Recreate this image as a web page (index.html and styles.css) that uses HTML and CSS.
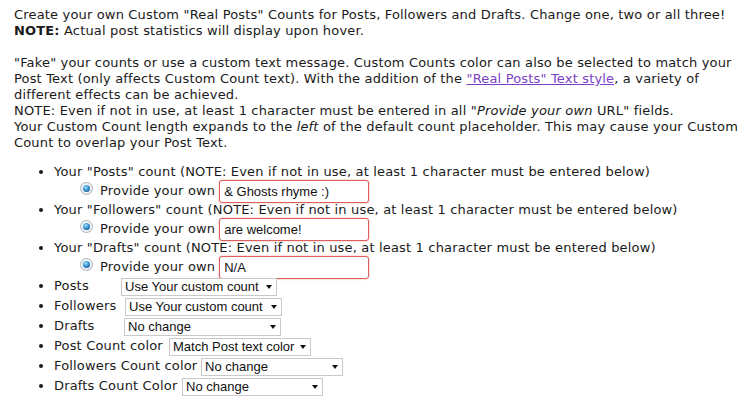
FILE: index.html
```html
<!DOCTYPE html>
<html>
<head>
<meta charset="utf-8">
<link rel="stylesheet" href="styles.css">
</head>
<body>
<div class="page">
  <p class="intro">Create your own Custom "Real Posts" Counts for Posts, Followers and Drafts. Change one, two or all three!<br><b>NOTE:</b> Actual post statistics will display upon hover.<br><br>"Fake" your counts or use a custom text message. Custom Counts color can also be selected to match your Post Text (only affects Custom Count text). With the addition of the <a href="#" class="link">"Real Posts" Text style</a>, a variety of different effects can be achieved.<br>NOTE: Even if not in use, at least 1 character must be entered in all "<i>Provide your own</i> URL" fields.<br>Your Custom Count length expands to the <i>left</i> of the default count placeholder. This may cause your Custom Count to overlap your Post Text.</p>

  <ul class="opts">
    <li class="text-item">Your "Posts" count (NOTE: Even if not in use, at least 1 character must be entered below)
      <ul class="sub">
        <li class="prov"><input type="radio" class="radio" name="p" checked><span class="prov-lbl">Provide your own</span><input type="text" class="field" value="&amp; Ghosts rhyme :)"></li>
      </ul>
    </li>
    <li class="text-item">Your "Followers" count (NOTE: Even if not in use, at least 1 character must be entered below)
      <ul class="sub">
        <li class="prov"><input type="radio" class="radio" name="f" checked><span class="prov-lbl">Provide your own</span><input type="text" class="field" value="are welcome!"></li>
      </ul>
    </li>
    <li class="text-item">Your "Drafts" count (NOTE: Even if not in use, at least 1 character must be entered below)
      <ul class="sub">
        <li class="prov"><input type="radio" class="radio" name="d" checked><span class="prov-lbl">Provide your own</span><input type="text" class="field" value="N/A"></li>
      </ul>
    </li>
    <li class="sel-row"><span class="lbl lbl-posts">Posts</span><span class="sel sel-w156"><select><option>Use Your custom count</option><option>No change</option></select></span></li>
    <li class="sel-row"><span class="lbl lbl-followers">Followers</span><span class="sel sel-w157"><select><option>Use Your custom count</option><option>No change</option></select></span></li>
    <li class="sel-row"><span class="lbl lbl-drafts">Drafts</span><span class="sel sel-w157"><select><option>No change</option><option>Use Your custom count</option></select></span></li>
    <li class="sel-row"><span class="lbl lbl-pcc">Post Count color</span><span class="sel sel-w142"><select><option>Match Post text color</option><option>No change</option></select></span></li>
    <li class="sel-row"><span class="lbl lbl-fcc">Followers Count color</span><span class="sel sel-w142"><select><option>No change</option><option>Match Post text color</option></select></span></li>
    <li class="sel-row"><span class="lbl lbl-dcc">Drafts Count Color</span><span class="sel sel-w141"><select><option>No change</option><option>Match Post text color</option></select></span></li>
  </ul>
</div>
</body>
</html>
```

FILE: styles.css
```css
html, body {
  margin: 0;
  padding: 0;
  background: #ffffff;
}

.page {
  padding: 7px 4px 0 14px;
  font-family: "DejaVu Sans", Verdana, sans-serif;
  font-size: 13px;
  line-height: 16px;
  letter-spacing: 0.17px;
  color: #1a1a1a;
}

.intro {
  margin: 0;
}

.link {
  color: #7b3fc5;
  text-decoration: underline;
}

.opts {
  margin: 13px 0 0 0;
  padding: 0 0 0 40px;
  list-style: disc;
}

.text-item {
  line-height: 16px;
}

.sub {
  margin: 0;
  padding: 0 0 0 26px;
  list-style: none;
}

.prov {
  display: flex;
  align-items: center;
  height: 22px;
}

.radio {
  appearance: none;
  -webkit-appearance: none;
  box-sizing: border-box;
  width: 13px;
  height: 13px;
  margin: -6px 7px 0 0;
  border-radius: 50%;
  border: 1px solid #aab4be;
  background: radial-gradient(circle at 50% 40%, #ffffff 0, #e4e8ec 100%);
  position: relative;
  flex: none;
}

.radio:checked::after {
  content: "";
  position: absolute;
  left: 2px;
  top: 2px;
  width: 7px;
  height: 7px;
  border-radius: 50%;
  background: radial-gradient(circle at 40% 35%, #a8e4ff 0, #3594d2 45%, #123f73 100%);
}

.prov-lbl {
  white-space: nowrap;
}

.field {
  box-sizing: border-box;
  width: 150px;
  height: 23px;
  margin: 0 0 0 4px;
  padding: 0 4px;
  border: 1px solid #de5d5d;
  border-radius: 3px;
  box-shadow: 0 0 2px rgba(222, 80, 80, 0.55);
  font-family: "Liberation Sans", Arial, sans-serif;
  font-size: 13px;
  letter-spacing: 0;
  color: #111111;
  background: #ffffff;
  outline: none;
}

.sel-row {
  height: 20px;
  line-height: 16px;
}

.lbl {
  display: inline-block;
  vertical-align: top;
  line-height: 16px;
  white-space: nowrap;
}

.lbl-posts { width: 67px; }
.lbl-followers { width: 71px; }
.lbl-drafts { width: 70px; }
.lbl-pcc { width: 115px; }
.lbl-fcc { width: 147px; }
.lbl-dcc { width: 128px; }

.sel {
  display: inline-block;
  vertical-align: top;
  position: relative;
  margin-top: 0;
}

.sel select {
  appearance: none;
  -webkit-appearance: none;
  box-sizing: border-box;
  width: 100%;
  height: 18px;
  margin: 0;
  padding: 0 13px 0 3px;
  border: 1px solid #c9c9c9;
  border-radius: 0;
  background: #ffffff;
  font-family: "Liberation Sans", Arial, sans-serif;
  font-size: 13px;
  letter-spacing: 0;
  line-height: 16px;
  color: #111111;
  display: block;
}

.sel::after {
  content: "";
  position: absolute;
  right: 5px;
  top: 7px;
  border-left: 3.5px solid transparent;
  border-right: 3.5px solid transparent;
  border-top: 4px solid #111111;
  pointer-events: none;
}

.sel-w156 { width: 156px; }
.sel-w157 { width: 157px; }
.sel-w142 { width: 142px; }
.sel-w141 { width: 141px; }
```
